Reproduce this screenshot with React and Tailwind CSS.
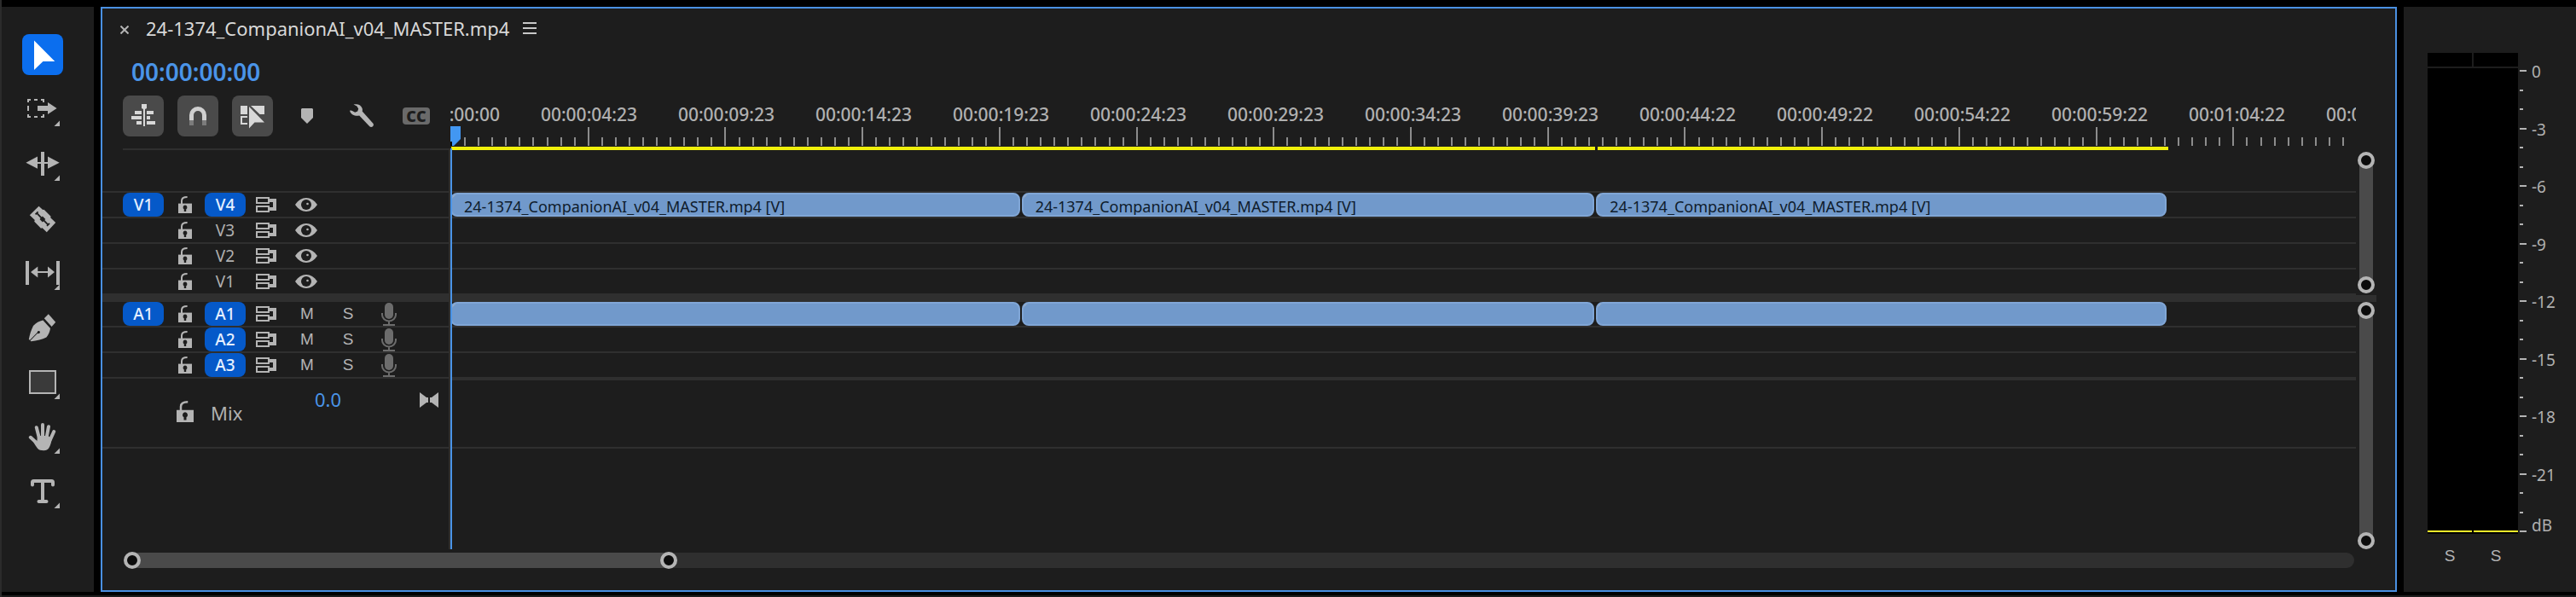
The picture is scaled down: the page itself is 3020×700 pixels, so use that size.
// App.jsx - Timeline panel with tool palette and audio meters
import React, { useState } from 'react';
import { Type } from 'lucide-react';

const CLIP_NAME = '24-1374_CompanionAI_v04_MASTER.mp4';

// Everything on the timeline is measured in frames
const VISIBLE_FRAMES = 1668;
const FRAMES_PER_LABEL = 120;

const RULER_LABELS = [
  '00:00:00:00',
  '00:00:04:23',
  '00:00:09:23',
  '00:00:14:23',
  '00:00:19:23',
  '00:00:24:23',
  '00:00:29:23',
  '00:00:34:23',
  '00:00:39:23',
  '00:00:44:22',
  '00:00:49:22',
  '00:00:54:22',
  '00:00:59:22',
  '00:01:04:22',
  '00:01:09:22',
];

const CLIPS = [
  { id: 1, start: 0, end: 499 },
  { id: 2, start: 500, end: 1001 },
  { id: 3, start: 1003, end: 1502 },
];

const RENDER_BARS = [
  { id: 1, start: 1, end: 1002 },
  { id: 2, start: 1004, end: 1504 },
];

const VIDEO_TRACKS = [
  { id: 'V4', source: 'V1', targeted: true, clips: CLIPS },
  { id: 'V3' },
  { id: 'V2' },
  { id: 'V1' },
];

const AUDIO_TRACKS = [
  { id: 'A1', source: 'A1', targeted: true, clips: CLIPS },
  { id: 'A2', targeted: true },
  { id: 'A3', targeted: true },
];

const METER_LABELS = ['0', '-3', '-6', '-9', '-12', '-15', '-18', '-21'];

const toPercent = (frames) => `${(frames / VISIBLE_FRAMES) * 100}%`;

/* ---------- Tool icons (48 x 48) ---------- */

const Corner = () => <path d="M44 37.5V44h-6.5z" />;

const TOOLS = [
  {
    id: 'Selection',
    icon: <path d="M14 7.5V42l10.4-10H38.3z" />,
  },
  {
    id: 'Track Select Forward',
    icon: (
      <>
        <path d="M6 12h4v2H8v2H6zM14 12h4v2h-4zM22 12h4v4h-2v-2h-2zM6 20h2v6H6zM6 30h2v2h2v2H6zM14 32h4v2h-4zM24 30h2v4h-4v-2h2z" />
        <path d="M18 20h12v-4l10.6 7L30 30v-4H18z" />
        <Corner />
      </>
    ),
  },
  {
    id: 'Ripple Edit',
    icon: (
      <>
        <path d="M4.4 22.8 18 15.6V22h4V10h4v12h4v-6.4l13.7 7.2L30 29.7V24h-4v14h-4V24h-4v5.7z" />
        <Corner />
      </>
    ),
  },
  {
    id: 'Razor',
    icon: (
      <>
        <path d="m19.5 9.7 4.7 4.4 1.4-.4 8 8-.4 1.6 6 5.6-10.4 11.4-5.2-5-1.6.5-7.8-8 .6-1.9-6-5.6z" />
        <path
          d="M15.6 19.4l3-3M17.4 18.2l12.8 13.2M29 32.800l3-3"
          fill="none"
          stroke="#1d1d1d"
          strokeWidth="1.8"
        />
        <path d="m23.9 21.6 3.4 3.4-3.4 3.4-3.4-3.4z" fill="#1d1d1d" />
      </>
    ),
  },
  {
    id: 'Slip',
    icon: (
      <>
        <path d="M4 10h4v28H4zM40 10h4v28h-4z" />
        <path d="m10 23 8.3-6.4V22H30v-5.4L38 23l-8 6.4V24H18.3v5.4z" />
        <Corner />
      </>
    ),
  },
  {
    id: 'Pen',
    icon: (
      <>
        <path d="m30.8 8.3 8.4 9.4-4.6 5.2-8.8-9.6z" />
        <path d="M24.4 15.4 33 25c-.6 4.2-2.2 7.6-4.6 10.4-5 2.6-11 4-18 4.8l-.9-.8 8.3-8.3c2.2.6 3.6-.8 3-2.3-.8-1.4-3-1-3 .9L9 38.7l-1.2-.6c1-5.8 2.6-11 5.2-16.2 3-3.4 7-5.6 11.4-6.5z" />
      </>
    ),
  },
  {
    id: 'Rectangle',
    icon: (
      <>
        <rect x="9" y="11" width="30" height="26" fill="#3a3a3a" stroke="#b4b4b4" strokeWidth="2" />
        <Corner />
      </>
    ),
  },
  {
    id: 'Hand',
    icon: (
      <>
        <path
          d="m9.8 24.8 9 8.2M16.8 13.2 20 26M24 10v16M31 12.2 28.4 26M37.2 18l-5.6 12.4"
          fill="none"
          stroke="#b4b4b4"
          strokeLinecap="round"
          strokeWidth="4"
        />
        <path d="M18 23h12.4l4.2 3.6c-.6 4.6-1.6 8.4-3.4 11-1 1.6-3 2.6-6 2.6-3.4 0-5.6-.6-7.2-2.4-1.6-2-3.6-5.4-5.4-8.6l4.6 1.4z" />
        <Corner />
      </>
    ),
  },
  {
    id: 'Type',
    icon: (
      <>
        <Type x="6" y="6" width="36" height="36" strokeWidth={2.67} />
        <Corner />
      </>
    ),
  },
];

/* ---------- Track icons ---------- */

const LockIcon = ({ className }) => (
  <svg viewBox="0 0 16 20" className={className} fill="none" aria-hidden="true">
    <path d="M4 10V5.4C4 2.4 6.6 1 10.6 1" stroke="#b4b4b4" strokeWidth="2" />
    <path d="M0 8.6h16V20H0z" fill="#b4b4b4" />
    <path d="M8 10.6a2.6 2.6 0 0 1 1.2 4.8V18H6.8v-2.6A2.6 2.6 0 0 1 8 10.6z" fill="#1d1d1d" />
  </svg>
);

const SyncIcon = () => (
  <svg viewBox="0 0 24 18" className="h-[18px] w-6" aria-hidden="true">
    <path
      fillRule="evenodd"
      fill="#b4b4b4"
      d="M0 0h16v8H0zM2 2v4h12V2zM0 10h16v8H0zM2 12v4h12v-4zM16 2h8v14h-8v-4h4V6h-4z"
    />
  </svg>
);

const EyeIcon = () => (
  <svg viewBox="0 0 26 16" className="h-4 w-[26px]" aria-hidden="true">
    <path d="M0 8c3.6-5.2 8-8 13-8s9.4 2.8 13 8c-3.6 5.2-8 8-13 8S3.6 13.2 0 8z" fill="#b4b4b4" />
    <circle cx="13" cy="8" r="6" fill="#1d1d1d" />
    <circle cx="14.5" cy="7" r="1.3" fill="#b4b4b4" />
  </svg>
);

const MicIcon = () => (
  <svg viewBox="0 0 20 28" className="h-7 w-5" aria-hidden="true">
    <rect x="5" y="1" width="10" height="19" rx="5" fill="#6c6c6c" />
    <path d="M2 13v2a8 7.5 0 0 0 16 0v-2M10 22.5V27M3 27h14" fill="none" stroke="#6c6c6c" strokeWidth="2" />
  </svg>
);

const IconButton = ({ label, children, className = '' }) => (
  <button type="button" aria-label={label} className={`flex items-center justify-center ${className}`}>
    {children}
  </button>
);

/* ---------- Tool palette ---------- */

const ToolPalette = () => {
  const [activeTool, setActiveTool] = useState('Selection');

  return (
    <nav aria-label="Tools" className="flex w-[108px] shrink-0 flex-col gap-4 bg-[#1d1d1d] pt-8 pl-6">
      {TOOLS.map((tool) => (
        <button
          key={tool.id}
          type="button"
          aria-label={tool.id}
          onClick={() => setActiveTool(tool.id)}
          className={`size-12 rounded-lg ${
            tool.id === activeTool ? 'bg-[#0b6eee] text-white' : 'text-[#b4b4b4]'
          }`}
        >
          <svg viewBox="0 0 48 48" className="size-12" fill="currentColor" aria-hidden="true">
            {tool.icon}
          </svg>
        </button>
      ))}
    </nav>
  );
};

/* ---------- Timeline header ---------- */

const TimelineToolbar = () => (
  <div className="flex h-16 w-[408px] shrink-0 flex-col pl-6">
    <div className="flex h-[62px] gap-4">
      <IconButton label="Insert as nest" className="size-12 rounded-lg bg-[#4a4a4a]">
        <svg viewBox="0 0 48 48" className="size-12" fill="#d8d8d8" aria-hidden="true">
          <path d="M22 10h6v5l-2 1v20h-2V16l-2-1zM14 18h8v4h-8zM28 18h8v4h-8zM10 24h12v4H10zM28 24h4v4h-4zM16 30h6v4h-6zM28 30h10v4H28z" />
        </svg>
      </IconButton>
      <IconButton label="Snap" className="size-12 rounded-lg bg-[#4a4a4a]">
        <svg viewBox="0 0 48 48" className="size-12" fill="none" strokeWidth="5" aria-hidden="true">
          <path d="M16.5 29v-6a7.5 7.5 0 0 1 15 0v6" stroke="#d0d0d0" />
          <path d="M16.5 29v6M31.5 29v6" stroke="#7c7c7c" />
        </svg>
      </IconButton>
      <IconButton label="Linked selection" className="size-12 rounded-lg bg-[#4a4a4a]">
        <svg viewBox="0 0 48 48" className="size-12" fill="#d8d8d8" aria-hidden="true">
          <path d="M10 12h8v10h-8zM22 12h16v10h-5.5L22 12z" />
          <path d="M10 24h8v2h-6v6h6v2h-8z" />
          <path d="M20 13v25.5l6.5-7H38z" />
        </svg>
      </IconButton>
      <IconButton label="Add marker" className="size-12">
        <svg viewBox="0 0 14 18" className="h-[18px] w-3.5" fill="#b4b4b4" aria-hidden="true">
          <path d="M1 0h12l1 1v10l-7 7-7-7V1z" />
        </svg>
      </IconButton>
      <IconButton label="Timeline display settings" className="size-12">
        <svg viewBox="0 0 28 28" className="size-7" fill="#b4b4b4" aria-hidden="true">
          <path d="M4.5.6C9-.8 13.6 1 14.7 5.200c.3 1.200.3 2.200 0 3.400L27.200 22.400c.9 1 1 2.400.1 3.500-1.200 1.400-3 1.400-4 .3L11.200 13.400c-4.400 1-9.400-.6-11-5l.4-1.200 2.400.8 3.200 1.800 3-1.200 1-3.200-1.800-3z" />
        </svg>
      </IconButton>
      <IconButton label="Captions" className="size-12">
        <span className="flex h-5 w-8 items-center justify-center rounded bg-[#6a6a6a] font-['Open_Sans',sans-serif] text-lg leading-5 font-extrabold text-[#1d1d1d]">
          CC
        </span>
      </IconButton>
    </div>
    <div className="h-0.5 bg-[#2f2f2f]" />
  </div>
);

const Ruler = () => (
  <div className="flex min-w-0 flex-1 flex-col overflow-hidden">
    {/* the labels are centred on the start of each cell */}
    <div className="-ml-[79px] flex h-[37px] pt-2 text-[21px] leading-7 font-medium text-[#b0b0b0]">
      {RULER_LABELS.map((label) => (
        <span key={label} className="w-[161px] shrink-0 text-center">
          {label}
        </span>
      ))}
    </div>
    <div className="flex h-[23px] items-start">
      {RULER_LABELS.map((label) => (
        <div
          key={label}
          className="flex h-[22px] shrink-0 items-end"
          style={{ width: toPercent(FRAMES_PER_LABEL) }}
        >
          {Array.from({ length: 10 }, (_, i) => (
            <span
              key={i}
              className={`flex-1 border-l-2 border-[#8c8c8c] ${i === 0 ? 'h-[22px]' : 'h-2.5'}`}
            />
          ))}
        </div>
      ))}
    </div>
    <FrameLane items={RENDER_BARS} className="h-1">
      {() => <div className="h-1 bg-[#f0f00a]" />}
    </FrameLane>
  </div>
);

/* ---------- Tracks ---------- */

// Places items along a lane by their start and end frame
const FrameLane = ({ items = [], className = '', children }) => (
  <div className={`flex ${className}`}>
    {items.map((item, i) => (
      <div
        key={item.id}
        className="min-w-0 shrink-0"
        style={{
          marginLeft: toPercent(item.start - (i > 0 ? items[i - 1].end : 0)),
          width: toPercent(item.end - item.start),
        }}
      >
        {children(item)}
      </div>
    ))}
  </div>
);

const Clip = ({ label }) => (
  <div className="relative h-7 overflow-hidden rounded-lg border-2 border-[#80a6d6] bg-[#7199cb]">
    <span className="absolute -top-2 -left-2 size-3 rotate-45 bg-[#b8b8b8]" />
    <span className="block truncate pl-3.5 text-lg leading-7 text-[#0f1c2c]">{label}</span>
  </div>
);

const SourcePatch = ({ children }) => (
  <button type="button" className="h-7 w-12 rounded-lg bg-[#0559c9] text-[19px] leading-7 font-medium text-[#e6f0ff]">
    {children}
  </button>
);

const TrackHeader = ({ track, audio }) => (
  <div className="flex h-[30px] items-center border-b-2 border-[#2f2f2f] pl-6">
    <div className="w-16">{track.source && <SourcePatch>{track.source}</SourcePatch>}</div>
    <IconButton label={`Lock ${track.id}`} className="w-[18px]">
      <LockIcon className="h-5 w-4" />
    </IconButton>
    <div className="ml-3.5 w-12">
      {track.targeted ? (
        <SourcePatch>{track.id}</SourcePatch>
      ) : (
        <button type="button" className="h-7 w-12 text-[19px] leading-7 text-[#b0b0b0]">
          {track.id}
        </button>
      )}
    </div>
    <IconButton label={`Sync lock ${track.id}`} className="ml-3 w-6">
      <SyncIcon />
    </IconButton>
    {audio ? (
      <>
        <button type="button" className="ml-3 w-12 font-['Liberation_Sans',sans-serif] text-[19px] leading-7 text-[#b4b4b4]">
          M
        </button>
        <button type="button" className="w-12 font-['Liberation_Sans',sans-serif] text-[19px] leading-7 text-[#b4b4b4]">
          S
        </button>
        <IconButton label={`Record ${track.id}`} className="w-12">
          <MicIcon />
        </IconButton>
      </>
    ) : (
      <IconButton label={`Toggle ${track.id} output`} className="ml-3 w-[46px]">
        <EyeIcon />
      </IconButton>
    )}
  </div>
);

const MixHeader = () => (
  <div className="flex h-[82px] items-start border-b-2 border-[#2f2f2f] pl-[87px]">
    <IconButton label="Lock Mix" className="mt-[26px] w-5">
      <LockIcon className="h-[25px] w-5" />
    </IconButton>
    <span className="mt-6 ml-5 w-[122px] text-[22px] leading-8 text-[#b0b0b0]">Mix</span>
    <button type="button" className="mt-2 text-[22px] leading-8 text-[#4a94e8]">
      0.0
    </button>
    <IconButton label="Mix keyframes" className="mt-4 mr-3 ml-auto">
      <svg viewBox="0 0 22 18" className="h-[18px] w-[22px]" fill="#b4b4b4" aria-hidden="true">
        <path d="M0 0l8 6h2v6H8l-8 6zM22 0l-8 6h-2v6h2l8 6z" />
      </svg>
    </IconButton>
  </div>
);

const TrackHeaders = () => (
  <div className="w-[408px] shrink-0 border-r-2 border-[#2f2f2f]">
    <div className="h-[50px] border-b-2 border-[#2f2f2f]" />
    {VIDEO_TRACKS.map((track) => (
      <TrackHeader key={track.id} track={track} />
    ))}
    <div className="h-2 bg-[#2f2f2f]" />
    {AUDIO_TRACKS.map((track) => (
      <TrackHeader key={track.id} track={track} audio />
    ))}
    <MixHeader />
  </div>
);

const TrackLanes = () => (
  <div className="min-w-0 flex-1">
    <div className="h-[50px] border-b-2 border-[#2f2f2f]" />
    {VIDEO_TRACKS.map((track) => (
      <FrameLane key={track.id} items={track.clips} className="h-[30px] border-b-2 border-[#2f2f2f]">
        {() => <Clip label={`${CLIP_NAME} [V]`} />}
      </FrameLane>
    ))}
    <div className="h-2 bg-[#2f2f2f]" />
    {AUDIO_TRACKS.map((track) => (
      <FrameLane key={track.id} items={track.clips} className="h-[30px] border-b-2 border-[#2f2f2f]">
        {() => <Clip />}
      </FrameLane>
    ))}
    <div className="h-[82px] border-t-2 border-b-2 border-[#2f2f2f]" />
  </div>
);

const Knob = ({ label }) => (
  <button
    type="button"
    aria-label={label}
    className="relative z-10 size-5 shrink-0 rounded-full border-4 border-[#b4b4b4] bg-[#0c0c0c]"
  />
);

const VerticalZoom = ({ label, className = '' }) => (
  <div className={`flex w-6 flex-col items-center ${className}`}>
    <Knob label={`${label} top`} />
    <div className="-my-2 w-4 flex-1 bg-[#4a4a4a]" />
    <Knob label={`${label} bottom`} />
  </div>
);

const HorizontalZoom = () => (
  <div className="mt-[3px] mr-12 ml-[25px] flex h-5 items-center">
    <div className="flex w-[24.8%] items-center">
      <Knob label="Zoom start" />
      <div className="-mx-2.5 h-[18px] flex-1 bg-[#4a4a4a]" />
      <Knob label="Zoom end" />
    </div>
    <div className="-ml-2.5 h-[18px] flex-1 rounded-r-full bg-[#2f2f2f]" />
  </div>
);

const Timeline = () => (
  <section className="flex min-w-0 flex-1 flex-col border-2 border-[#4a90e2] bg-[#1d1d1d]">
    <header className="flex h-[46px] items-center pl-[21px]">
      <IconButton label="Close sequence" className="w-2.5">
        <svg viewBox="0 0 10 10" className="mt-1 size-2.5" stroke="#b4b4b4" strokeWidth="2" aria-hidden="true">
          <path d="M.5.5l9 9M9.5.5l-9 9" />
        </svg>
      </IconButton>
      <h1 className="ml-5 text-[22px] leading-8 text-[#d8d8d8]">{CLIP_NAME}</h1>
      <IconButton label="Panel menu" className="ml-4">
        <svg viewBox="0 0 16 14" className="h-3.5 w-4" fill="#c8c8c8" aria-hidden="true">
          <path d="M0 0h16v2H0zM0 6h16v2H0zM0 12h16v2H0z" />
        </svg>
      </IconButton>
    </header>

    <div className="flex h-14 items-center pl-[34px]">
      <button type="button" className="text-[28px] leading-8 font-semibold text-[#4a94e8]">
        00:00:00:00
      </button>
    </div>

    <div className="flex pr-[46px]">
      <TimelineToolbar />
      <Ruler />
    </div>

    <div className="relative flex h-[468px]">
      <TrackHeaders />
      <TrackLanes />
      <div className="mr-[22px] flex w-6 flex-col">
        <VerticalZoom label="Video track height" className="mt-0.5 h-[166px]" />
        <div className="mt-0.5 h-2 bg-[#2f2f2f]" />
        <VerticalZoom label="Audio track height" className="flex-1" />
      </div>
      {/* playhead */}
      <div className="absolute bottom-0 left-[408px] h-[470px] w-0.5 bg-[#4a94e8]" />
      <svg viewBox="0 0 12 23" className="absolute -top-7 left-[408px] h-[23px] w-3" fill="#4297f2" aria-hidden="true">
        <path d="M0 0h12v15l-8 8H2v-5H0z" />
        <path d="M0 18h2v5H0z" fill="#000" />
      </svg>
    </div>

    <HorizontalZoom />
  </section>
);

/* ---------- Audio meters ---------- */

const AudioMeters = () => (
  <aside className="flex w-[202px] shrink-0 flex-col bg-[#1d1d1d] pt-[54px] pl-7">
    <div className="flex">
      <div className="w-[106px]">
        <div className="flex h-4 gap-0.5">
          <div className="flex-1 bg-black" />
          <div className="flex-1 bg-black" />
        </div>
        <div className="mt-0.5 flex h-[546px] items-end gap-0.5 bg-black pb-0.5">
          <div className="h-0.5 flex-1 bg-[#f5f02a]" />
          <div className="h-0.5 flex-1 bg-[#f5f02a]" />
        </div>
      </div>

      <div className="ml-0.5 flex h-[562px] flex-col pt-5">
        {METER_LABELS.map((label) => (
          <div key={label} className="flex flex-1 gap-1.5">
            <div className="flex w-2 flex-col">
              <div className="flex-1"><div className="h-0.5 w-2 bg-[#b4b4b4]" /></div>
              <div className="flex-1"><div className="h-0.5 w-1 bg-[#b4b4b4]" /></div>
              <div className="flex-1"><div className="h-0.5 w-1 bg-[#b4b4b4]" /></div>
            </div>
            <span className="-mt-2.5 text-[19px] leading-6 text-[#b0b0b0]">{label}</span>
          </div>
        ))}
        <div className="flex h-0.5 gap-1.5">
          <div className="h-0.5 w-2 bg-[#b4b4b4]" />
          <span className="-mt-[18px] h-6 text-[19px] leading-6 text-[#b0b0b0]">dB</span>
        </div>
      </div>
    </div>
    <div className="mt-3.5 flex w-[106px] gap-0.5 font-['Liberation_Sans',sans-serif] text-[19px] leading-6 text-[#b4b4b4]">
      <button type="button" className="flex-1" aria-label="Solo left">S</button>
      <button type="button" className="flex-1" aria-label="Solo right">S</button>
    </div>
  </aside>
);

export default function App() {
  return (
    <div className="flex min-h-screen flex-col border-l-2 border-[#2b2b2b] bg-black font-['Noto_Sans',sans-serif]">
      <main className="flex flex-1 gap-2 pt-2 pb-1">
        <ToolPalette />
        <Timeline />
        <AudioMeters />
      </main>
      <div className="h-0.5 bg-[#1d1d1d]" />
    </div>
  );
}
